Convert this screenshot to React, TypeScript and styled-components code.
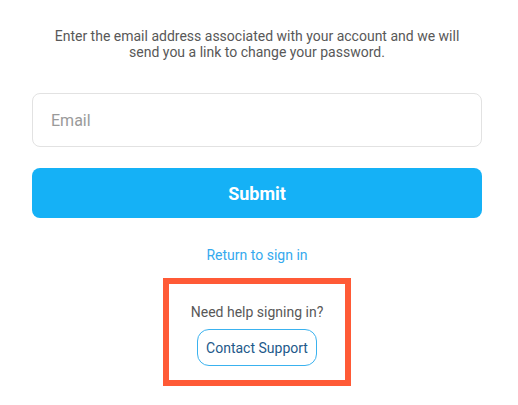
import React from 'react';
import styled, { createGlobalStyle } from 'styled-components';

const GlobalStyle = createGlobalStyle`
  html, body {
    margin: 0;
    padding: 0;
    background: #ffffff;
  }
  body {
    font-family: Roboto, "Liberation Sans", Arial, sans-serif;
  }
  * {
    box-sizing: border-box;
  }
`;

const Page = styled.main`
  width: 518px;
  padding: 28px 36px 0 32px;
  display: flex;
  flex-direction: column;
  align-items: center;
`;

const Description = styled.p`
  margin: 0;
  width: 420px;
  text-align: center;
  font-size: 14px;
  line-height: 16px;
  color: #585858;
`;

const Form = styled.form`
  width: 450px;
  margin-top: 33px;
  display: flex;
  flex-direction: column;
  gap: 21px;
`;

const EmailInput = styled.input`
  height: 54px;
  width: 100%;
  padding: 0 18px;
  border: 1px solid #e2e2e2;
  border-radius: 8px;
  font-family: inherit;
  font-size: 16px;
  color: #333333;
  outline: none;

  &::placeholder {
    color: #9a9a9a;
  }
`;

const SubmitButton = styled.button`
  height: 50px;
  width: 100%;
  padding-top: 2px;
  border: none;
  border-radius: 8px;
  background: #15b1f6;
  color: #ffffff;
  font-family: inherit;
  font-size: 18px;
  font-weight: 700;
  cursor: pointer;
`;

const ReturnLink = styled.a`
  margin-top: 29px;
  font-size: 14px;
  line-height: 16px;
  color: #35a9ee;
  text-decoration: none;
  cursor: pointer;
`;

const HelpBox = styled.section`
  margin-top: 15px;
  width: 188px;
  padding: 20px 0 14px;
  border: 6px solid #ff5a36;
  display: flex;
  flex-direction: column;
  align-items: center;
  gap: 9px;
`;

const HelpText = styled.p`
  margin: 0;
  font-size: 14px;
  line-height: 16px;
  color: #585858;
`;

const SupportButton = styled.button`
  height: 37px;
  padding: 0 8px;
  border: 1px solid #3ab2ef;
  border-radius: 12px;
  background: #ffffff;
  color: #22598a;
  font-family: inherit;
  font-size: 14px;
  cursor: pointer;
`;

export default function App() {
  return (
    <>
      <GlobalStyle />
      <Page>
        <Description>
          Enter the email address associated with your account and we will send you a link to change your password.
        </Description>
        <Form onSubmit={(e) => e.preventDefault()}>
          <EmailInput type="email" placeholder="Email" />
          <SubmitButton type="submit">Submit</SubmitButton>
        </Form>
        <ReturnLink>Return to sign in</ReturnLink>
        <HelpBox>
          <HelpText>Need help signing in?</HelpText>
          <SupportButton type="button">Contact Support</SupportButton>
        </HelpBox>
      </Page>
    </>
  );
}
